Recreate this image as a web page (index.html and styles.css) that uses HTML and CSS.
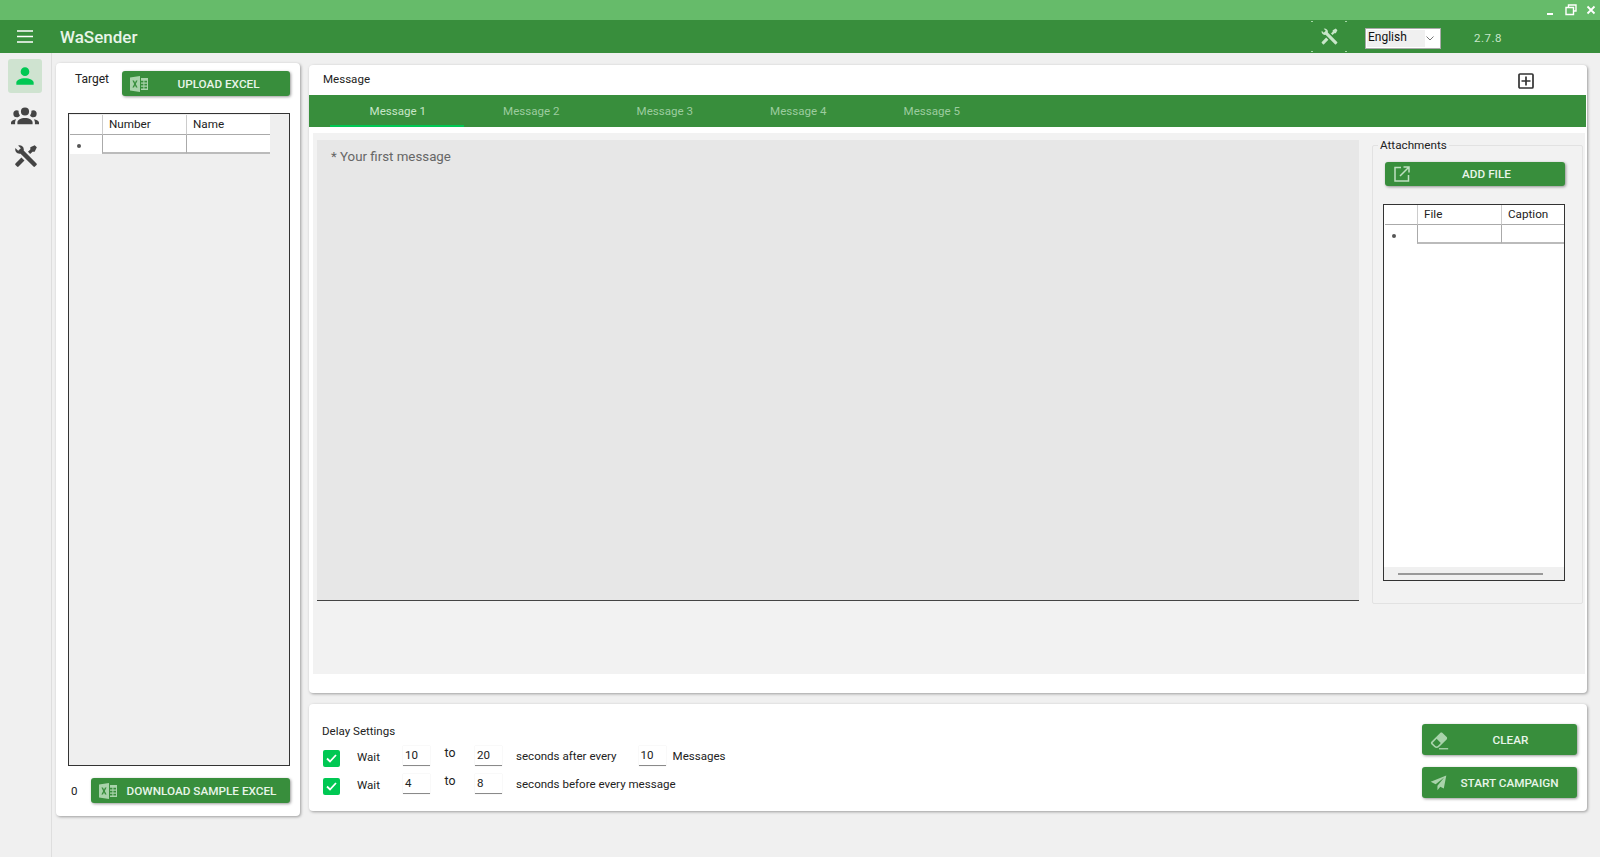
FILE: index.html
```html
<!DOCTYPE html>
<html lang="en">
<head>
<meta charset="utf-8">
<title>WaSender</title>
<link rel="stylesheet" href="styles.css">
</head>
<body>
<svg class="defs" width="0" height="0" aria-hidden="true">
  <symbol id="excel" viewBox="0 0 18 16">
    <path fill="currentColor" fill-rule="evenodd" d="M0 1.5 10 0V16L0 14.5ZM2.4 4.6 4.2 8 2.4 11.4H4L5 9.3 6 11.4H7.6L5.8 8 7.600 4.600H6L5 6.700 4 4.600Z"/>
    <path fill="currentColor" d="M11 2h7v12h-7v-1.400h2.400v-1.800H11V9.600h2.400V7.800H11V6.600h2.400V4.800H11ZM14.400 4.800v1.800H17V4.800ZM14.400 7.800v1.800H17V7.800ZM14.400 10.800v1.800H17V10.800Z"/>
  </symbol>
  <symbol id="tools" viewBox="0 0 24 24">
    <path fill="currentColor" d="M21.71 20.29L20.29 21.71A1 1 0 0 1 18.88 21.71L7 9.85A3.81 3.81 0 0 1 6 10A4 4 0 0 1 2.22 4.7L4.76 7.24L5.29 6.71L6.71 5.29L7.24 4.76L4.7 2.22A4 4 0 0 1 10 6A3.81 3.81 0 0 1 9.85 7L21.71 18.88A1 1 0 0 1 21.71 20.29M2.29 18.88A1 1 0 0 0 2.29 20.29L3.71 21.71A1 1 0 0 0 5.12 21.71L10.59 16.25L7.76 13.42M20 2L16 4V6L13.83 8.17L15.83 10.17L18 8H20L22 4Z"/>
  </symbol>
</svg>

<div class="titlebar">
  <svg class="win-icon" width="10" height="12" viewBox="0 0 10 12"><rect x="2" y="9" width="6" height="2" fill="#fff"/></svg>
  <svg class="win-icon win-restore" width="12" height="12" viewBox="0 0 12 12"><path fill="none" stroke="#fff" stroke-width="1.400" d="M3.500 3V1h7.500v6H8.500M1 3.500h7.500V10.500H1Z"/></svg>
  <svg class="win-icon" width="10" height="12" viewBox="0 0 10 12"><path fill="none" stroke="#fff" stroke-width="1.800" d="M1.500 2.500l7 7M8.500 2.500l-7 7"/></svg>
</div>

<header class="appbar">
  <svg class="menu-icon" width="16" height="13" viewBox="0 0 16 13"><path stroke="#fff" stroke-width="1.500" d="M0 1h16M0 6.500h16M0 12h16"/></svg>
  <div class="brand">WaSender</div>
  <div class="tool-box">
    <svg class="tool-icon"><use href="#tools"/></svg>
  </div>
  <div class="lang"><span class="lang-text">English</span><svg width="8" height="5" viewBox="0 0 8 5"><path fill="none" stroke="#777" d="M.5.500 4 4 7.500.500"/></svg></div>
  <div class="version">2.7.8</div>
</header>

<div class="main">
  <nav class="sidebar">
    <div class="nav-item active">
      <svg width="26" height="26" viewBox="0 0 24 24"><path fill="#00c853" d="M12,4A4,4 0 0,1 16,8A4,4 0 0,1 12,12A4,4 0 0,1 8,8A4,4 0 0,1 12,4M12,14C16.420,14 20,15.790 20,18V20H4V18C4,15.790 7.580,14 12,14Z"/></svg>
    </div>
    <div class="nav-item">
      <svg width="28" height="28" viewBox="0 0 24 24"><path fill="#444" d="M12,5.500A3.500,3.500 0 0,1 15.500,9A3.500,3.500 0 0,1 12,12.500A3.500,3.500 0 0,1 8.500,9A3.500,3.500 0 0,1 12,5.500M5,8C5.560,8 6.080,8.150 6.530,8.420C6.380,9.850 6.800,11.270 7.660,12.380C7.160,13.340 6.160,14 5,14A3,3 0 0,1 2,11A3,3 0 0,1 5,8M19,8A3,3 0 0,1 22,11A3,3 0 0,1 19,14C17.840,14 16.840,13.340 16.340,12.380C17.200,11.270 17.620,9.850 17.470,8.420C17.920,8.150 18.440,8 19,8M5.500,18.250C5.500,16.180 8.410,14.500 12,14.500C15.590,14.500 18.500,16.180 18.500,18.250V20H5.500V18.250M0,20V18.500C0,17.110 1.890,15.940 4.450,15.600C3.860,16.280 3.500,17.220 3.500,18.250V20H0M24,20H20.500V18.250C20.500,17.220 20.140,16.280 19.550,15.600C22.110,15.940 24,17.110 24,18.500V20Z"/></svg>
    </div>
    <div class="nav-item nav-last">
      <svg class="nav-tools" width="26" height="26"><use href="#tools"/></svg>
    </div>
  </nav>

  <div class="content">
    <section class="card target">
      <div class="target-head">
        <span class="target-label">Target</span>
        <button class="btn btn-upload"><svg class="btn-excel"><use href="#excel"/></svg><span class="btn-text">UPLOAD EXCEL</span></button>
      </div>
      <div class="grid-box target-grid">
        <div class="dgrid">
          <div class="cell corner"></div><div class="cell head">Number</div><div class="cell head">Name</div>
          <div class="cell rowhead"><span class="row-dot"></span></div><div class="cell body"></div><div class="cell body"></div>
        </div>
      </div>
      <div class="target-foot">
        <span class="count">0</span>
        <button class="btn btn-download"><svg class="btn-excel"><use href="#excel"/></svg><span class="btn-text">DOWNLOAD SAMPLE EXCEL</span></button>
      </div>
    </section>

    <div class="right">
      <section class="card message">
        <div class="message-head">
          <span class="message-label">Message</span>
          <svg class="add-icon" width="16" height="16" viewBox="0 0 16 16"><rect x="1" y="1" width="14" height="14" rx="1" fill="none" stroke="#333" stroke-width="1.700"/><path stroke="#333" stroke-width="1.700" d="M8 3.500v9M3.500 8h9"/></svg>
        </div>
        <div class="tabs">
          <div class="tab active">Message 1</div>
          <div class="tab">Message 2</div>
          <div class="tab">Message 3</div>
          <div class="tab">Message 4</div>
          <div class="tab">Message 5</div>
        </div>
        <div class="message-body">
          <div class="editor">* Your first message</div>
          <fieldset class="attachments">
            <legend>Attachments</legend>
            <button class="btn btn-add">
              <svg class="btn-open" viewBox="0 0 16 16"><path fill="none" stroke="currentColor" stroke-width="1.500" d="M7 1.500H1v13.500h13.500V9M6 10 14.500 1.500M9.500 1h5.500v5.500"/></svg>
              <span class="btn-text">ADD FILE</span>
            </button>
            <div class="grid-box file-grid">
              <div class="dgrid file-dgrid">
                <div class="cell corner"></div><div class="cell head">File</div><div class="cell head">Caption</div>
                <div class="cell rowhead"><span class="row-dot"></span></div><div class="cell body"></div><div class="cell body"></div>
              </div>
              <div class="hscroll"><div class="hthumb"></div></div>
            </div>
          </fieldset>
        </div>
      </section>

      <section class="card delay">
        <div class="delay-settings">
          <div class="delay-title">Delay Settings</div>
          <div class="delay-row">
            <span class="check"><svg width="11" height="9" viewBox="0 0 11 9"><path fill="none" stroke="#fff" stroke-width="1.800" d="M1 4.500 4 7.500 10 1"/></svg></span>
            <span class="wait">Wait</span>
            <span class="num">10</span>
            <span class="to">to</span>
            <span class="num">20</span>
            <span class="phrase">seconds after every</span>
            <span class="num num-msg">10</span>
            <span class="msgs">Messages</span>
          </div>
          <div class="delay-row">
            <span class="check"><svg width="11" height="9" viewBox="0 0 11 9"><path fill="none" stroke="#fff" stroke-width="1.800" d="M1 4.500 4 7.500 10 1"/></svg></span>
            <span class="wait">Wait</span>
            <span class="num">4</span>
            <span class="to">to</span>
            <span class="num">8</span>
            <span class="phrase">seconds before every message</span>
          </div>
        </div>
        <div class="actions">
          <button class="btn btn-action">
            <svg class="btn-action-icon btn-eraser" viewBox="0 0 24 24"><path fill="currentColor" d="M16.240,3.560L21.190,8.500C21.970,9.290 21.970,10.550 21.190,11.340L12,20.530C10.440,22.090 7.910,22.090 6.340,20.530L2.810,17C2.030,16.210 2.030,14.950 2.810,14.160L13.410,3.560C14.200,2.780 15.460,2.780 16.240,3.560M4.220,15.580L7.760,19.110C8.540,19.900 9.800,19.900 10.590,19.110L14.120,15.580L9.170,10.630L4.220,15.580Z"/><path stroke="currentColor" stroke-width="1.600" d="M12 22.500h11"/></svg>
            <span class="btn-text">CLEAR</span>
          </button>
          <button class="btn btn-action">
            <svg class="btn-action-icon" viewBox="0 0 24 24"><path fill="currentColor" d="M23 2 1 11l7 3.500L20 5 10.500 16.500V23l4-5 5 2.500Z"/></svg>
            <span class="btn-text">START CAMPAIGN</span>
          </button>
        </div>
      </section>
    </div>
  </div>
</div>
</body>
</html>
```

FILE: styles.css
```css
* { box-sizing: border-box; }

html, body {
  margin: 0;
  height: 857px;
  overflow: hidden;
}

body {
  width: 1600px;
  background: #f0f0f0;
  font-family: Roboto, "Liberation Sans", sans-serif;
  font-size: 11.550px;
  color: #222;
  display: flex;
  flex-direction: column;
}

.defs { display: block; height: 0; }

/* title bar */
.titlebar {
  height: 20px;
  background: #66bb6a;
  display: flex;
  justify-content: flex-end;
  align-items: center;
  gap: 9px;
  padding-right: 4px;
}
.win-icon { display: block; }
.win-restore { margin-left: 1px; }

/* app bar */
.appbar {
  height: 33px;
  background: #388e3c;
  display: flex;
  align-items: center;
  padding-left: 17px;
}
.menu-icon { flex: none; }
.brand {
  margin-left: 27px;
  margin-top: 1px;
  font-size: 17px;
  font-weight: 500;
  color: #e8f5e9;
}
.tool-box {
  margin-left: auto;
  margin-top: -1px;
  width: 36px;
  height: 31px;
  display: flex;
  align-items: center;
  justify-content: center;
  background:
    linear-gradient(#a5d6a7, #a5d6a7) 0 0 / 2px 1px no-repeat,
    linear-gradient(#a5d6a7, #a5d6a7) 100% 0 / 2px 1px no-repeat,
    linear-gradient(#a5d6a7, #a5d6a7) 0 100% / 2px 1px no-repeat,
    linear-gradient(#a5d6a7, #a5d6a7) 100% 100% / 2px 1px no-repeat;
}
.tool-icon { width: 19px; height: 19px; color: #c8e6c9; }
.lang {
  margin-left: 18px;
  margin-top: 3px;
  width: 76px;
  height: 21px;
  background: #fff;
  border: 1px solid #aaa;
  display: flex;
  align-items: center;
  justify-content: space-between;
  padding: 1px 6px 1px 1px;
}
.lang-text {
  width: 58px;
  height: 100%;
  background: #f0f0f0;
  font-size: 12px;
  color: #111;
  line-height: 15px;
  padding-left: 1px;
}
.version {
  width: 159px;
  padding-left: 33px;
  font-size: 11.500px;
  letter-spacing: .5px;
  color: #c8e6c9;
  margin-top: 2px;
}

/* layout */
.main {
  flex: 1;
  display: flex;
  min-height: 0;
}
.sidebar {
  width: 52px;
  flex: none;
  border-right: 1px solid #dedede;
  padding: 6px 0 0 8px;
  display: flex;
  flex-direction: column;
  gap: 5px;
}
.nav-item {
  width: 34px;
  height: 34px;
  border-radius: 3px;
  display: flex;
  align-items: center;
  justify-content: center;
}
.nav-item.active { background: #cfe3d0; }
.nav-last { margin-top: 2px; }
.nav-tools { color: #444; margin-left: 1px; }

.content {
  flex: 1;
  display: flex;
  align-items: flex-start;
  gap: 9px;
  padding: 10px 13px 0 4px;
  min-width: 0;
}
.card {
  background: #fff;
  border-radius: 4px;
  box-shadow: 1px 1px 3px rgba(0, 0, 0, .35);
}

/* target card */
.target {
  width: 244px;
  height: 753px;
  flex: none;
  padding: 8px 10px 13px 12px;
  display: flex;
  flex-direction: column;
}
.target-head {
  display: flex;
  justify-content: space-between;
  height: 25px;
}
.target-label { margin: 1px 0 0 7px; font-size: 12px; }
.grid-box {
  border: 1px solid #333;
  overflow: hidden;
}
.target-grid {
  height: 653px;
  margin-top: 17px;
  background: #efefef;
  padding: 1px;
}
.dgrid {
  display: grid;
  grid-template-columns: 32px 84px 83.500px;
  grid-template-rows: 20px 19px;
  width: max-content;
}
.cell { background: #fff; line-height: 19px; padding-left: 6px; font-size: 11.700px; }
.head { border-left: 1px solid #ccc; border-bottom: 1px solid #aaa; }
.corner { border-bottom: 1px solid #aaa; }
.rowhead { padding: 3px 0 0 7px; display: flex; align-items: center; }
.row-dot { width: 4px; height: 4px; border-radius: 50%; background: #555; }
.body { border-left: 1px solid #aaa; border-bottom: 2px solid #bbb; }
.target-foot {
  margin-top: 12px;
  display: flex;
  align-items: center;
  justify-content: space-between;
}
.count { margin-left: 3px; }

/* buttons */
.btn {
  display: flex;
  align-items: center;
  border: 0;
  border-radius: 3px;
  background: #388e3c;
  color: #e8f5e9;
  font-family: inherit;
  font-size: 11.750px;
  font-weight: 500;
  padding: 0;
  box-shadow: 1px 1px 3px rgba(0, 0, 0, .4);
}
.btn-text { flex: 1; text-align: center; }
.btn-excel { flex: none; width: 18px; height: 16px; color: #a9d3ab; margin-left: 8px; }
.btn-upload { width: 168px; height: 25px; }
.btn-upload .btn-text { padding-right: 17px; padding-left: 16px; }
.btn-download { width: 199px; height: 25px; }
.btn-download .btn-text { padding-left: 2px; padding-right: 6px; }

/* message card */
.right {
  flex: 1;
  display: flex;
  flex-direction: column;
  gap: 11px;
  margin-top: 2px;
  min-width: 0;
}
.message { height: 628px; padding-bottom: 19px; display: flex; flex-direction: column; }
.message-head {
  height: 30px;
  padding: 0 53px 0 14px;
  display: flex;
  align-items: center;
  justify-content: space-between;
  flex: none;
}
.message-label { margin-top: -2px; }
.add-icon { margin-top: 2px; }
.tabs {
  height: 32px;
  flex: none;
  background: #388e3c;
  padding-left: 21px;
  margin-right: 1px;
  display: flex;
}
.tab {
  width: 133.500px;
  text-align: center;
  line-height: 33px;
  padding-left: 2px;
  color: #9ccc9f;
}
.tab.active { color: #c8e6c9; border-bottom: 2px solid #00c853; }
.message-body {
  flex: 1;
  margin: 6px 2px 0 4px;
  background: #f2f2f2;
  padding: 7px 2px 0 4px;
  display: flex;
  align-items: flex-start;
  min-height: 0;
}
.editor {
  width: 1042px;
  height: 461px;
  background: #e7e7e7;
  border-bottom: 1px solid #444;
  padding: 9px 14px;
  font-size: 13.300px;
  color: #666;
}
.attachments {
  width: 211px;
  height: 466px;
  margin: -2px 0 0 13px;
  padding: 0 0 0 10px;
  border: 1px solid #e2e2e2;
  border-radius: 2px;
  min-width: 0;
}
.attachments legend {
  padding: 0 2px;
  margin-left: -5px;
  font-size: 11.700px;
  line-height: 14px;
}
.btn-add { width: 180px; height: 24px; margin: 10px 0 0 2px; }
.btn-open { width: 16px; height: 16px; margin-left: 9px; color: #bfe0c1; flex: none; }
.btn-add .btn-text { padding-right: 2px; }
.file-grid {
  width: 182px;
  height: 377px;
  margin-top: 18px;
  background: #fff;
  display: flex;
  flex-direction: column;
  justify-content: space-between;
}
.file-dgrid { grid-template-columns: 32px 84px 64px; margin: 0 0 0 1px; }
.hscroll {
  height: 13px;
  background: #f0f0f0;
  display: flex;
  align-items: center;
  padding-left: 14px;
}
.hthumb { width: 145px; height: 2px; background: #999; }

/* delay card */
.delay {
  height: 107px;
  display: flex;
  justify-content: space-between;
  padding: 0 10px 0 14px;
}
.delay-settings { padding-top: 20px; }
.delay-title { height: 17px; line-height: 14px; margin-left: -1px; }
.delay-row {
  display: flex;
  align-items: center;
  height: 28px;
  margin-top: 1px;
}
.delay-row + .delay-row { margin-top: 0; }
.check {
  width: 17px;
  height: 17px;
  margin-top: 4px;
  background: #00c853;
  border-radius: 2px;
  display: flex;
  align-items: center;
  justify-content: center;
  margin-right: 17px;
}
.wait { width: 46px; padding-top: 2px; }
.num {
  width: 27px;
  height: 20px;
  line-height: 19px;
  padding-left: 2px;
  background: #fff;
  border-bottom: 1px solid #8a8a8a;
  box-shadow: 0 0 1px rgba(0, 0, 0, .15);
}
.to { width: 45px; text-align: center; margin-top: -7px; padding-right: 5px; font-size: 12.300px; }
.phrase { margin-left: 14px; }
.num-msg { margin-left: 22px; }
.msgs { margin-left: 7px; }
.actions {
  display: flex;
  flex-direction: column;
  gap: 12px;
  padding-top: 20px;
}
.btn-action { width: 155px; height: 31px; }
.btn-action-icon { width: 17px; height: 17px; margin-left: 8px; color: #a9d3ab; flex: none; }
.btn-eraser { width: 20px; height: 20px; margin-left: 7px; }
.btn-action .btn-text { padding-left: 1px; padding-right: 6px; }
```
